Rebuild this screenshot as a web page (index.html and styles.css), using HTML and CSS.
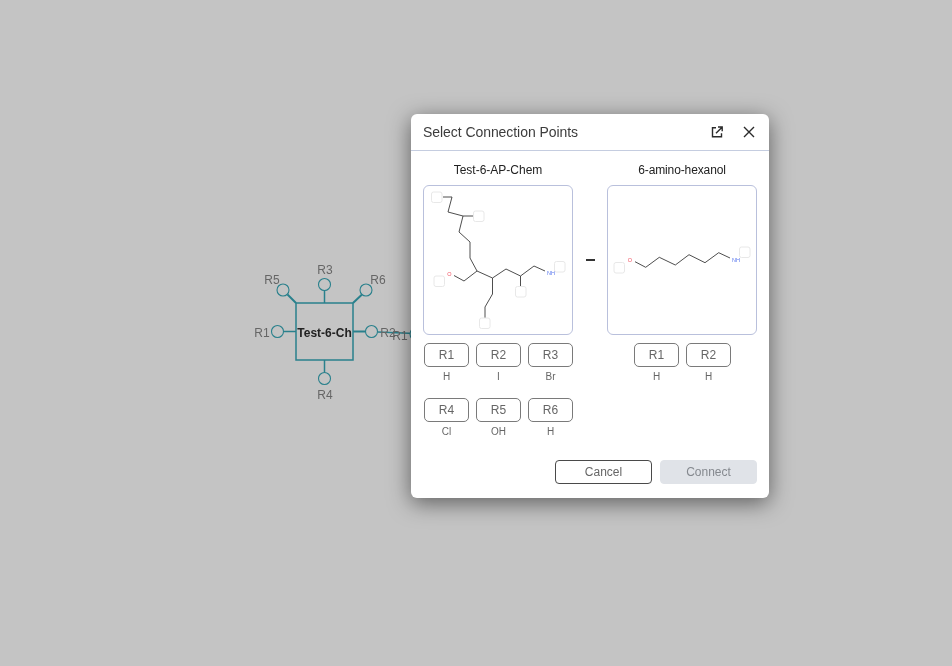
FILE: index.html
```html
<!DOCTYPE html>
<html lang="en">
<head>
<meta charset="utf-8">
<title>Select Connection Points</title>
<link rel="stylesheet" href="styles.css">
</head>
<body>
<svg class="canvas" width="952" height="666" viewBox="0 0 952 666">
  <g class="bonds">
    <line x1="284" y1="331.5" x2="296" y2="331.5"/>
    <line x1="353" y1="331.5" x2="365.5" y2="331.5" class="thick"/>
    <line x1="324.5" y1="290.500" x2="324.5" y2="303"/>
    <line x1="324.5" y1="360" x2="324.5" y2="372.500"/>
    <line x1="287.500" y1="294.500" x2="296" y2="303" class="thick"/>
    <line x1="362" y1="294.500" x2="353" y2="303" class="thick"/>
    <line x1="377.500" y1="332" x2="415" y2="333.500"/>
  </g>
  <rect class="node" x="296" y="303" width="57" height="57"/>
  <g class="ports">
    <circle cx="277.500" cy="331.500" r="6"/>
    <circle cx="371.500" cy="331.500" r="6"/>
    <circle cx="324.500" cy="284.500" r="6"/>
    <circle cx="324.500" cy="378.500" r="6"/>
    <circle cx="283" cy="290" r="6"/>
    <circle cx="366" cy="290" r="6"/>
    <circle cx="416" cy="334" r="6"/>
  </g>
  <g class="labels">
    <text x="262" y="337">R1</text>
    <text x="388" y="337">R2</text>
    <text x="325" y="274">R3</text>
    <text x="325" y="399">R4</text>
    <text x="272" y="284">R5</text>
    <text x="378" y="284">R6</text>
    <text x="400" y="340">R1</text>
  </g>
  <text class="node-name" x="324.500" y="337">Test-6-Ch</text>
</svg>

<section class="dialog">
  <header class="dialog-head">
    <h1 class="dialog-title">Select Connection Points</h1>
    <div class="head-actions">
      <button class="icon-btn" aria-label="Open in new window">
        <svg width="16" height="16" viewBox="0 0 16 16"><path d="M7 3.800H3.500v9h9V9.300M7 9.300l5.800-5.800M9 3h4.200v4.200" /></svg>
      </button>
      <button class="icon-btn" aria-label="Close">
        <svg width="16" height="16" viewBox="0 0 16 16"><path d="M3 3l10 10M13 3L3 13"/></svg>
      </button>
    </div>
  </header>
  <div class="dialog-body">
    <div class="monomer">
      <div class="monomer-name">Test-6-AP-Chem</div>
      <svg class="structure" width="150" height="150" viewBox="424 186 148 148">
        <polyline class="bond" points="443,197 452,197 448,212 463,216 459,232 470,242 470,258 477,271 464,281 454,275.500"/>
        <polyline class="bond" points="463,216 473,216"/>
        <polyline class="bond" points="477,271 492.500,278 506,269 520.500,276 534,266 545,271"/>
        <polyline class="bond" points="520.500,276 520.500,287"/>
        <polyline class="bond" points="492.500,278 492.500,294 485,307 485,318"/>
        <text class="atom-o" x="449.500" y="275.500">O</text>
        <text class="atom-n" x="551" y="275">NH</text>
        <rect class="r-slot" x="431.500" y="192" width="10.500" height="10.500" rx="2"/>
        <rect class="r-slot" x="473.500" y="211" width="10.500" height="10.500" rx="2"/>
        <rect class="r-slot" x="434" y="276" width="10.500" height="10.500" rx="2"/>
        <rect class="r-slot" x="554.500" y="261.500" width="10.500" height="10.500" rx="2"/>
        <rect class="r-slot" x="479.500" y="318" width="10.500" height="10.500" rx="2"/>
        <rect class="r-slot" x="515.500" y="286.500" width="10.500" height="10.500" rx="2"/>
      </svg>
      <div class="r-groups">
        <div class="r-group"><button class="r-btn">R1</button><span class="r-cap">H</span></div>
        <div class="r-group"><button class="r-btn">R2</button><span class="r-cap">I</span></div>
        <div class="r-group"><button class="r-btn">R3</button><span class="r-cap">Br</span></div>
        <div class="r-group"><button class="r-btn">R4</button><span class="r-cap">Cl</span></div>
        <div class="r-group"><button class="r-btn">R5</button><span class="r-cap">OH</span></div>
        <div class="r-group"><button class="r-btn">R6</button><span class="r-cap">H</span></div>
      </div>
    </div>
    <div class="link-col"><span class="dash"></span></div>
    <div class="monomer">
      <div class="monomer-name monomer-name-tight">6-amino-hexanol</div>
      <svg class="structure" width="150" height="150" viewBox="608 186 148 148">
        <polyline class="bond" points="635,261.700 645.700,267.300 659.300,257.300 675.300,265 689,254.700 705,262.700 718.700,252.700 730,258"/>
        <text class="atom-o" x="630" y="262">O</text>
        <text class="atom-n" x="736" y="262">NH</text>
        <rect class="r-slot" x="614" y="262.500" width="10.500" height="10.500" rx="2"/>
        <rect class="r-slot" x="739.500" y="247" width="10.500" height="10.500" rx="2"/>
      </svg>
      <div class="r-groups">
        <div class="r-group"><button class="r-btn">R1</button><span class="r-cap">H</span></div>
        <div class="r-group"><button class="r-btn">R2</button><span class="r-cap">H</span></div>
      </div>
    </div>
  </div>
  <footer class="dialog-foot">
    <button class="action">Cancel</button>
    <button class="action action-off">Connect</button>
  </footer>
</section>
</body>
</html>
```
FILE: styles.css
```css
* { box-sizing: border-box; }
html, body { margin: 0; height: 666px; overflow: hidden; }
body {
  position: relative;
  background: #c4c4c4;
  font-family: "Liberation Sans", Arial, sans-serif;
}
button { font-family: inherit; cursor: pointer; }

.canvas { position: absolute; left: 0; top: 0; will-change: transform; }
.bonds line { stroke: #29808c; stroke-width: 1.500; }
.bonds line.thick { stroke-width: 2; }
.node { fill: none; stroke: #29808c; stroke-width: 1.500; }
.ports circle { fill: #c4c4c4; stroke: #29808c; stroke-width: 1.100; }
.labels text { font-size: 12px; fill: #666; text-anchor: middle; }
.node-name { font-size: 12px; font-weight: 700; fill: #222; text-anchor: middle; }

.dialog {
  position: absolute;
  left: 411px;
  top: 114px;
  width: 358px;
  height: 384px;
  display: flex;
  flex-direction: column;
  background: #fff;
  border-radius: 6px;
  box-shadow: 0 5px 22px rgba(0, 0, 0, .52);
  will-change: transform;
}
.dialog-head {
  height: 37px;
  flex: none;
  display: flex;
  align-items: center;
  justify-content: space-between;
  padding: 0 12px 1px;
  border-bottom: 1px solid #c5cde0;
}
.dialog-title { margin: 0; font-size: 14px; font-weight: 400; color: #3c3c3c; letter-spacing: -.06px; }
.head-actions { display: flex; gap: 16px; }
.icon-btn {
  width: 16px;
  height: 16px;
  padding: 0;
  border: 0;
  background: none;
  display: block;
  position: relative;
  top: .5px;
}
.icon-btn svg { display: block; fill: none; stroke: #2b2b2b; stroke-width: 1.400; }

.dialog-body {
  flex: 1;
  display: grid;
  grid-template-columns: 150px 34px 150px;
  padding: 12px 12px 0;
  align-items: start;
}
.monomer-name {
  height: 14px;
  line-height: 14px;
  font-size: 12px;
  color: #222;
  text-align: center;
  margin-bottom: 8px;
}
.monomer-name-tight { letter-spacing: -.12px; }
.structure {
  display: block;
  background: #fff;
  border: 1px solid #b9c0dc;
  border-radius: 6px;
}
.bond { fill: none; stroke: #3a3a3a; stroke-width: .9; }
.atom-o, .atom-n { font-size: 5.500px; text-anchor: middle; }
.atom-o { fill: #f05060; }
.atom-n { fill: #5a78ee; }
.r-slot { fill: #fff; stroke: #e8e8e8; stroke-width: 1; }

.r-groups {
  display: flex;
  flex-wrap: wrap;
  justify-content: center;
  column-gap: 7px;
  row-gap: 11px;
  margin-top: 8px;
  padding-left: 1px;
}
.r-group { width: 45px; display: flex; flex-direction: column; align-items: center; }
.r-btn {
  width: 45px;
  height: 24px;
  padding: 0;
  border: 1px solid #7a7a7a;
  border-radius: 5px;
  background: #fff;
  color: #666;
  font-size: 12px;
}
.r-cap {
  height: 20px;
  line-height: 20px;
  font-size: 10px;
  color: #666;
}
.link-col { height: 150px; margin-top: 22px; display: flex; align-items: center; justify-content: center; }
.dash { width: 9px; height: 2px; background: #333; }

.dialog-foot {
  flex: none;
  display: flex;
  justify-content: flex-end;
  gap: 8px;
  padding: 0 12px 14px;
}
.action {
  width: 97px;
  height: 24px;
  padding: 0;
  border: 1px solid #4a4a4a;
  border-radius: 4px;
  background: #fff;
  color: #666;
  font-size: 12px;
}
.action-off {
  border-color: #e0e3e8;
  background: #e0e3e8;
  color: #85898f;
}
```
